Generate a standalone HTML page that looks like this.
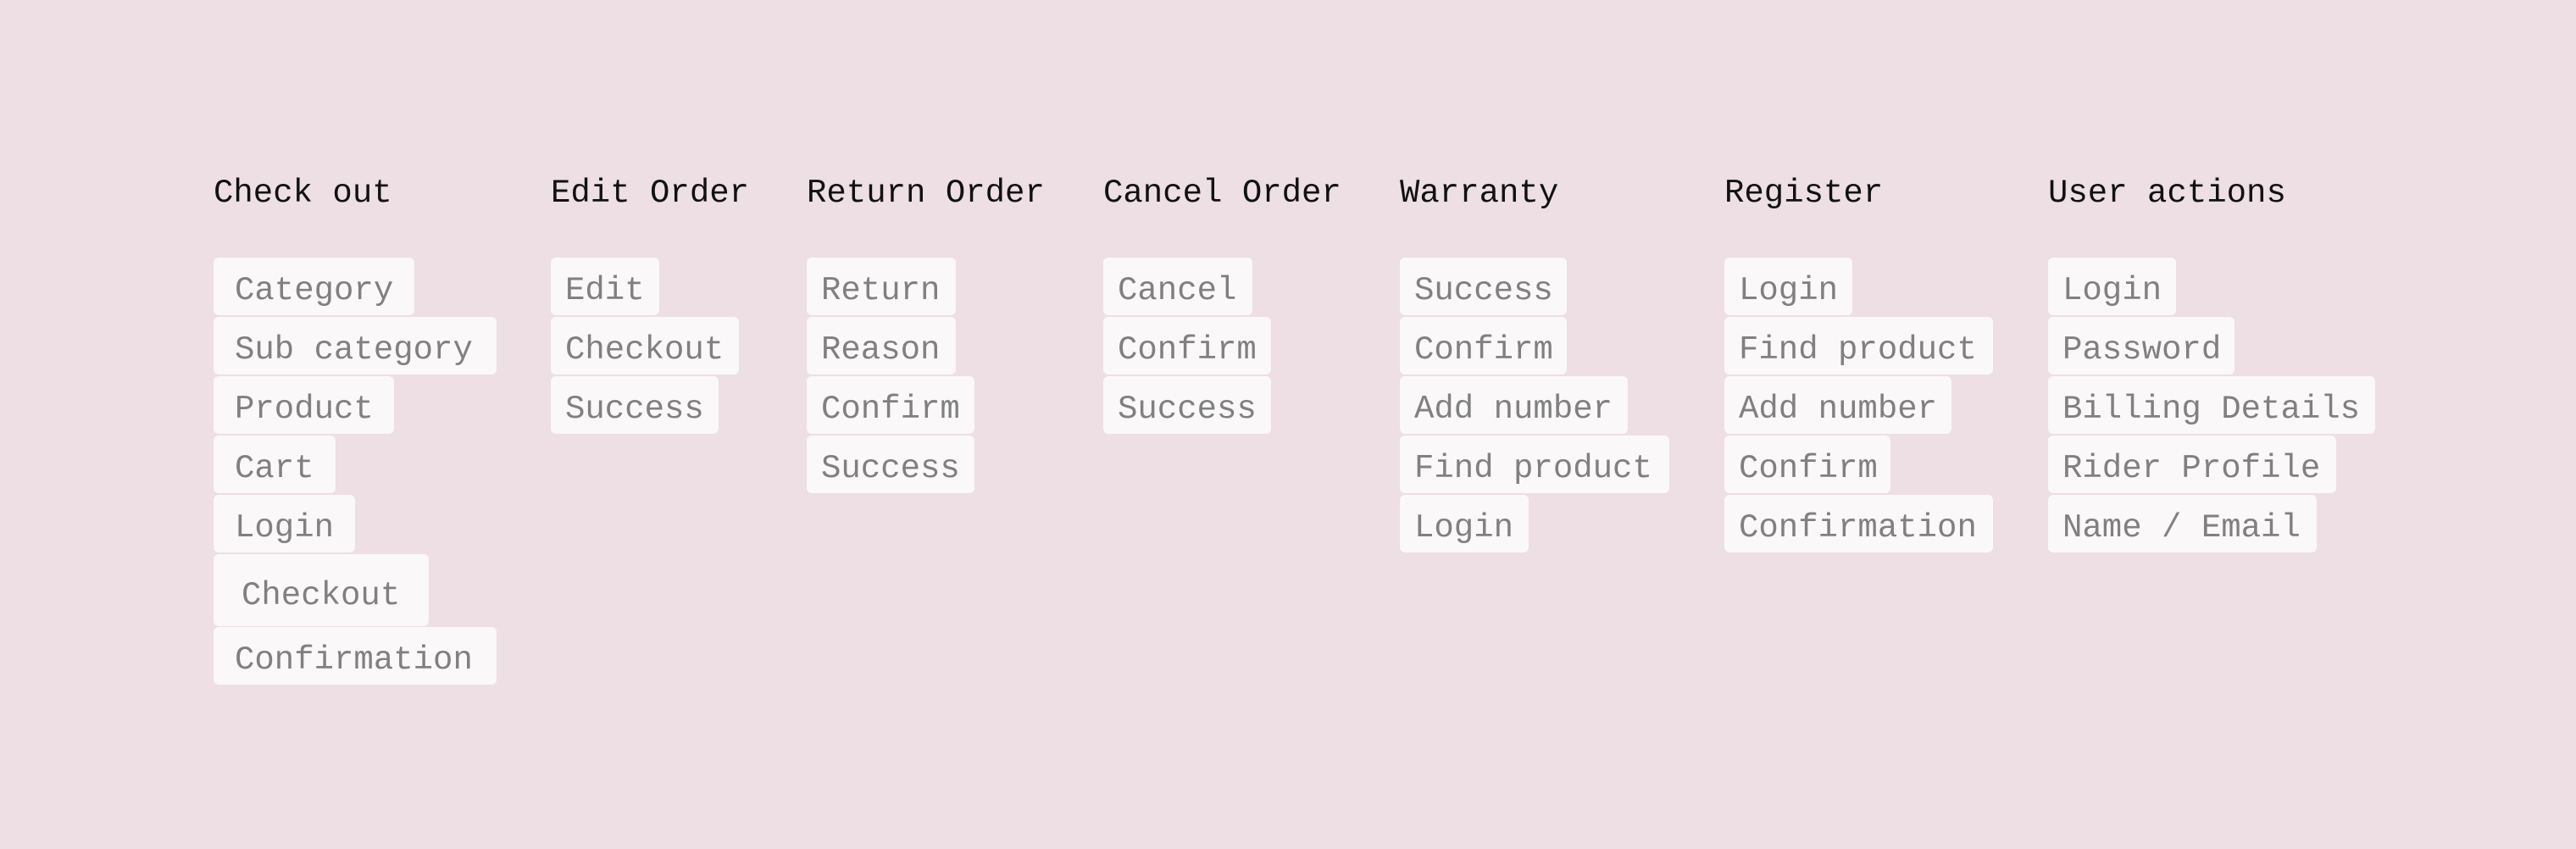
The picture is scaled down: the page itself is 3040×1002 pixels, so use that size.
<!DOCTYPE html>
<html><head><meta charset="utf-8"><style>
html,body{margin:0;padding:0}
body{width:3040px;height:1002px;background:#eddfe4;position:relative;overflow:hidden;font-family:"Liberation Mono",monospace;font-size:39px}
.t{position:absolute;top:206px;line-height:44px;color:#111;white-space:pre}
.b{position:absolute;height:68px;line-height:79px;background:#faf8f9;border-radius:6px;color:#808080;white-space:pre;box-sizing:border-box;padding-left:17px}
</style></head><body>
<div class="t" style="left:252px">Check out</div>
<div class="t" style="left:650px">Edit Order</div>
<div class="t" style="left:952px">Return Order</div>
<div class="t" style="left:1302px">Cancel Order</div>
<div class="t" style="left:1652px">Warranty</div>
<div class="t" style="left:2035px">Register</div>
<div class="t" style="left:2417px">User actions</div>

<div class="b" style="left:252px;top:304px;width:237px;padding-left:25px">Category</div>
<div class="b" style="left:252px;top:374px;width:334px;padding-left:25px">Sub category</div>
<div class="b" style="left:252px;top:444px;width:213px;padding-left:25px">Product</div>
<div class="b" style="left:252px;top:514px;width:144px;padding-left:25px">Cart</div>
<div class="b" style="left:252px;top:584px;width:167px;padding-left:25px">Login</div>
<div class="b" style="left:252px;top:654px;width:254px;height:85px;line-height:99px;padding-left:33px">Checkout</div>
<div class="b" style="left:252px;top:740px;width:334px;padding-left:25px">Confirmation</div>

<div class="b" style="left:650px;top:304px;width:128px">Edit</div>
<div class="b" style="left:650px;top:374px;width:222px">Checkout</div>
<div class="b" style="left:650px;top:444px;width:198px">Success</div>

<div class="b" style="left:952px;top:304px;width:176px">Return</div>
<div class="b" style="left:952px;top:374px;width:176px">Reason</div>
<div class="b" style="left:952px;top:444px;width:198px">Confirm</div>
<div class="b" style="left:952px;top:514px;width:198px">Success</div>

<div class="b" style="left:1302px;top:304px;width:176px">Cancel</div>
<div class="b" style="left:1302px;top:374px;width:198px">Confirm</div>
<div class="b" style="left:1302px;top:444px;width:198px">Success</div>

<div class="b" style="left:1652px;top:304px;width:197px">Success</div>
<div class="b" style="left:1652px;top:374px;width:197px">Confirm</div>
<div class="b" style="left:1652px;top:444px;width:269px">Add number</div>
<div class="b" style="left:1652px;top:514px;width:318px">Find product</div>
<div class="b" style="left:1652px;top:584px;width:152px">Login</div>

<div class="b" style="left:2035px;top:304px;width:151px">Login</div>
<div class="b" style="left:2035px;top:374px;width:317px">Find product</div>
<div class="b" style="left:2035px;top:444px;width:268px">Add number</div>
<div class="b" style="left:2035px;top:514px;width:196px">Confirm</div>
<div class="b" style="left:2035px;top:584px;width:317px">Confirmation</div>

<div class="b" style="left:2417px;top:304px;width:151px">Login</div>
<div class="b" style="left:2417px;top:374px;width:220px">Password</div>
<div class="b" style="left:2417px;top:444px;width:386px">Billing Details</div>
<div class="b" style="left:2417px;top:514px;width:340px">Rider Profile</div>
<div class="b" style="left:2417px;top:584px;width:317px">Name / Email</div>
</body></html>
